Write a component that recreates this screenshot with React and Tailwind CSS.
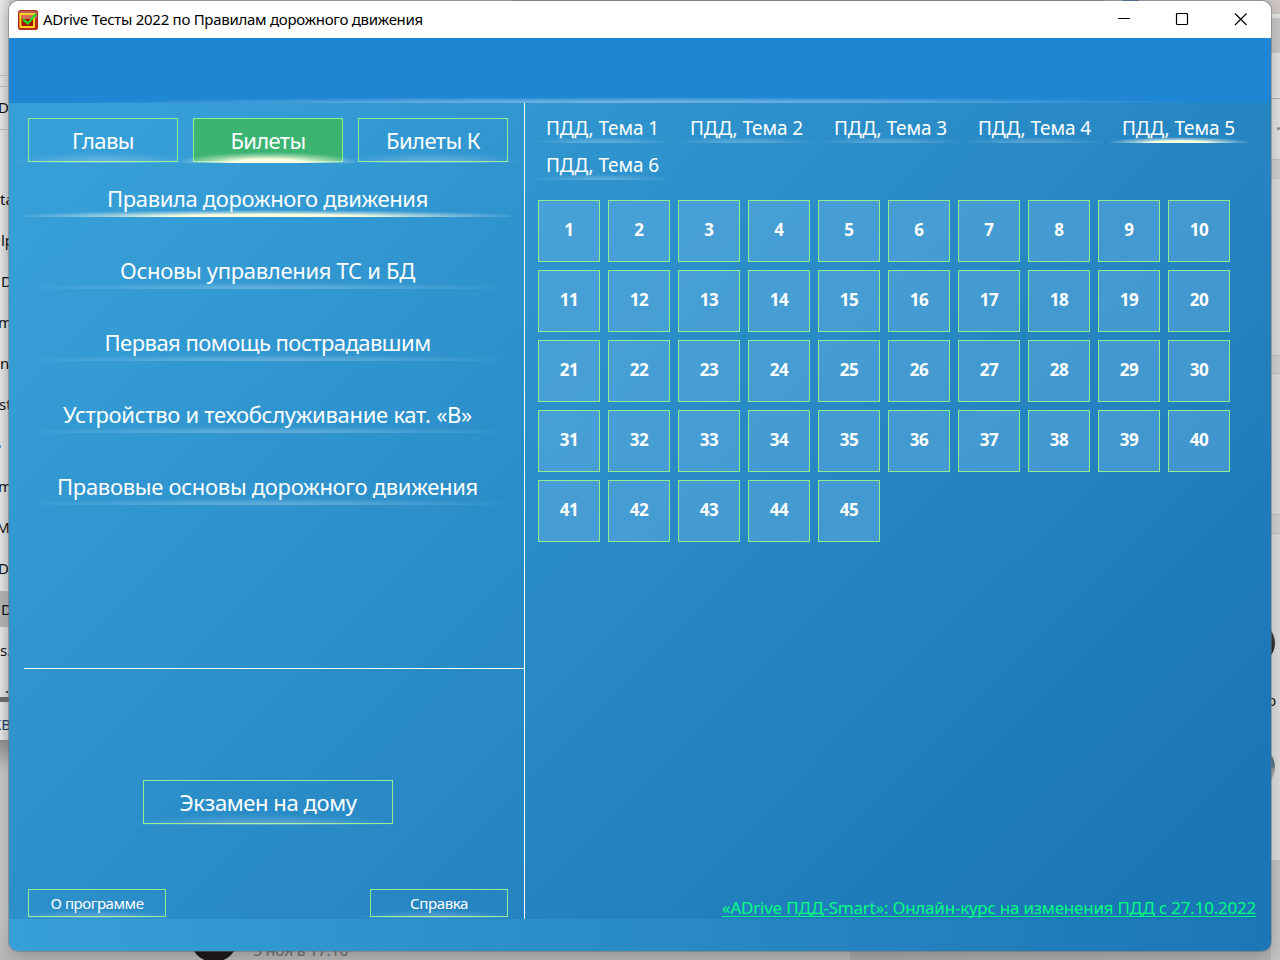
import { useLayoutEffect, useRef } from "react";

// Spreads a label over a given width by adjusting its letter spacing.
function Fit({ w, children, className = "" }) {
  const ref = useRef(null);
  useLayoutEffect(() => {
    const el = ref.current;
    el.style.letterSpacing = "0px";
    const natural = el.getBoundingClientRect().width;
    el.style.letterSpacing = (w - natural) / children.length + "px";
  }, [w, children]);
  return (
    <span ref={ref} className={`inline-block whitespace-nowrap ${className}`}>
      {children}
    </span>
  );
}

const soft =
  "bg-[radial-gradient(ellipse_54%_100%_at_50%_100%,rgba(255,255,255,.25)_0%,rgba(255,255,255,.17)_40%,rgba(255,255,255,.05)_80%,transparent_100%)]";
const bright =
  "bg-[radial-gradient(ellipse_54%_100%_at_50%_100%,#ffffe0_0%,#ffffe0_36%,rgba(255,255,224,.5)_62%,rgba(255,255,255,.18)_85%,transparent_100%)]";

function Glow({ on, className }) {
  return <span className={`pointer-events-none absolute ${on ? bright : soft} ${className}`} />;
}

function Button({ w, children, on, size, glow, className = "" }) {
  return (
    <button
      className={`relative flex items-center justify-center border border-[#90ee90] ${size} ${on ? "bg-[#3cb371]" : ""} ${className}`}
    >
      <Fit w={w}>{children}</Fit>
      <Glow on={on} className={glow} />
    </button>
  );
}

const chapters = [
  ["Правила дорожного движения", 321],
  ["Основы управления ТС и БД", 295],
  ["Первая помощь пострадавшим", 326],
  ["Устройство и техобслуживание кат. «В»", 409],
  ["Правовые основы дорожного движения", 421],
];

const leftScraps = [
  ["D", 97, -2], ["ta", 189, 0], ["lp", 230, 1], ["D", 271, 1], ["m", 312, -2], ["n", 353, 0], ["st", 394, -1],
  ["m", 476, -2], ["TM", 517, -12], ["DD", 558, -13], ["D", 599, 1], ["s.", 640, 0], [".", 677, 5], ["KB", 714, -8],
];

function Desktop() {
  return (
    <div className="absolute inset-0 bg-[#c4c4c5]">
      <div className="absolute top-0 left-0 h-[740px] w-[9px] overflow-hidden bg-[linear-gradient(to_right,#e8e8e8,#d2d2d2)] text-[15px] leading-5 text-[#111]">
        <div className="absolute top-[75px] h-px w-full bg-[#bdbdbd]" />
        <div className="absolute top-[86px] h-px w-full bg-[#bdbdbd]" />
        <div className="absolute top-[129px] h-px w-full bg-[#bdbdbd]" />
        <div className="absolute top-[591px] h-[36px] w-full bg-[#b5b5b5]" />
        <div className="absolute top-[445px] h-[3px] w-px bg-[#4aa8cc]" />
        <div className="absolute top-[697px] h-[5px] w-full bg-[#707070]" />
        {leftScraps.map(([t, y, x], i) => (
          <span
            key={i}
            className={`absolute whitespace-nowrap ${t === "KB" ? "text-[#1f4068]" : ""}`}
            style={{ top: y, left: x }}
          >
            {t}
          </span>
        ))}
      </div>
      <div className="absolute top-[740px] left-0 h-[220px] w-[163px] bg-[linear-gradient(#8f8f91,#c8c8ca_14%,#c8c8ca_80%,#b9b9bb)]" />
      <div className="absolute top-0 right-0 h-[860px] w-[9px] overflow-hidden bg-[#dddddd]">
        <div className="h-[14px] bg-[#cfc5c4]" />
        <div className="h-[4px] bg-[#e6e6e6]" />
        <div className="h-[35px] bg-[#c8c8c8]" />
        <div className="h-[45px] bg-[#e3e3e3]" />
        <div className="h-px bg-[#b0b0b0]" />
        <div className="h-[60px] bg-[#e1e1e1]" />
        <div className="h-[20px] border-y border-[#c0c3c9] bg-[#cfd0d2]" />
        <div className="absolute top-[355px] h-[19px] w-full border-y border-[#c0c3c9] bg-[#cfd0d2]" />
        <div className="absolute top-[514px] h-[20px] w-full border-y border-[#c0c3c9] bg-[#cfd0d2]" />
        <div className="absolute top-[622px] -left-[38px] size-[42px] rounded-full bg-[linear-gradient(#50584f,#181512)]" />
        <span className="absolute top-[690px] -left-[4px] text-[15px] leading-5 text-[#222]">р</span>
        <div className="absolute top-[746px] -left-[38px] size-[42px] rounded-full bg-[linear-gradient(#55798d_45%,#aaa29c_60%)]" />
        <div className="absolute top-[127px] right-0 size-[3px] rounded-full bg-[#888]" />
      </div>
      <div className="absolute top-0 left-[512px] h-px w-[593px] bg-[#aaa09e]" />
      <div className="absolute top-0 left-[1123px] h-px w-[16px] bg-[#2c6cb8]" />
      <div className="absolute top-[940px] left-[163px] h-[20px] w-[687px] overflow-hidden bg-[#bbbaba]">
        <div className="absolute -top-[26px] left-[27px] size-[48px] rounded-full bg-[#1d1a18]" />
        <span className="absolute top-0 left-[90px] text-[16px] leading-5 text-[#6d7076]">
          <Fit w={95}>3 ноя в 17:16</Fit>
        </span>
      </div>
      <div className="absolute top-[940px] left-[850px] h-[20px] w-[421px] bg-[linear-gradient(to_right,#a9aaac,#b4b5b7)]" />
    </div>
  );
}

function TitleBar() {
  return (
    <header className="flex h-[37px] items-center bg-white pl-[9px] text-[15px] text-black">
      <svg width="20" height="20" viewBox="0 0 20 20" className="mr-[5px]">
        <rect width="20" height="20" rx="2.5" fill="#b02a1c" />
        <rect x="1" y="1" width="18" height="8" rx="2" fill="#c4625a" />
        <rect x="2.5" y="4" width="13.5" height="13" fill="#a81008" stroke="#ffd21c" strokeWidth="2" />
        <path d="M4 9V5H15V9Z" fill="#cf6f5c" />
        <path d="M5 9.5 10 13.5 18 4" fill="none" stroke="#20d928" strokeWidth="2.3" />
      </svg>
      <Fit w={380}>ADrive Тесты 2022 по Правилам дорожного движения</Fit>
      <svg width="132" height="14" viewBox="0 0 132 14" className="mr-[22px] ml-auto" fill="none" stroke="#000" strokeWidth="1.2">
        <path d="M1 5.5H13" strokeWidth="1" />
        <rect x="59.5" y="0.5" width="11" height="11" rx="1" />
        <path d="M118 0.5 129.500 12M129.500 0.5 118 12" />
      </svg>
    </header>
  );
}

export default function App() {
  return (
    <div className="relative h-[960px] w-[1280px] overflow-hidden font-['Noto_Sans','Open_Sans',sans-serif]">
      <Desktop />
      <div className="absolute top-px left-[9px] flex h-[950px] w-[1262px] flex-col overflow-hidden rounded-[9px] text-white shadow-[0_0_0_1px_rgba(110,110,110,.5),0_6px_18px_rgba(0,0,0,.22)]">
        <TitleBar />
        <div className="relative h-[65px] shrink-0 bg-[#1e86d3]">
          <span className="absolute inset-x-0 bottom-0 h-[6px] bg-[radial-gradient(ellipse_46%_100%_at_50%_100%,rgba(255,255,255,.38)_0%,rgba(255,255,255,.28)_45%,rgba(255,255,255,.08)_82%,transparent_100%)]" />
        </div>
        <div className="flex h-[816px] shrink-0 bg-[linear-gradient(135deg,#379fd7_0%,#379fd7_7%,#1b76b5_92%,#1b76b5_100%)]">
          <div className="flex w-[516px] shrink-0 flex-col border-r border-white">
            <div className="flex h-[565px] flex-col pt-[15px]">
              <div className="flex gap-[15px] pl-[19px] text-[22px]">
                <Button w={62} size="h-[44px] w-[150px]" glow="-bottom-[2px] -left-[12px] h-[11px] w-[173px]">Главы</Button>
                <Button w={75} on size="h-[44px] w-[150px]" glow="-bottom-[2px] -left-[12px] h-[11px] w-[173px]">Билеты</Button>
                <Button w={94} size="h-[44px] w-[150px]" glow="-bottom-[2px] -left-[12px] h-[11px] w-[173px]">Билеты К</Button>
              </div>
              <nav className="flex flex-col pt-[16px] pl-[16px] text-[22px]">
                {chapters.map(([t, w], i) => (
                  <div key={t} className="relative mb-[33px] flex h-[39px] w-[485px] items-center justify-center pt-[2px]">
                    <Fit w={w}>{t}</Fit>
                    <Glow on={i === 0} className="inset-x-0 bottom-0 h-[7px]" />
                  </div>
                ))}
              </nav>
            </div>
            <div className="ml-[15px] flex grow flex-col border-t border-white">
              <div className="mt-[111px] ml-[119px] text-[22px]">
                <Button w={177} size="h-[44px] w-[250px]" glow="-bottom-[2px] -left-[12px] h-[11px] w-[264px]">Экзамен на дому</Button>
              </div>
              <div className="mt-[65px] flex justify-between pr-[16px] pl-[4px] text-[15px]">
                <Button w={93} size="h-[28px] w-[138px]" glow="-bottom-[2px] -left-[12px] h-[8px] w-[156px]">О программе</Button>
                <Button w={58} size="h-[28px] w-[138px]" glow="-bottom-[2px] -left-[12px] h-[8px] w-[156px]">Справка</Button>
              </div>
            </div>
          </div>
          <div className="flex grow flex-col">
            <div className="flex flex-wrap gap-x-[6px] pt-[7px] pl-[9px] text-[19px]">
              {[1, 2, 3, 4, 5, 6].map((n) => (
                <div key={n} className="relative flex h-[37px] w-[138px] items-center pl-[12px]">
                  <Fit w={113}>{`ПДД, Тема ${n}`}</Fit>
                  <Glow on={n === 5} className="inset-x-0 bottom-[4px] h-[6px]" />
                </div>
              ))}
            </div>
            <div className="mt-[16px] ml-[13px] grid w-[692px] grid-cols-10 gap-2 text-[17px] font-bold tracking-[-0.4px]">
              {Array.from({ length: 45 }, (_, i) => (
                <button key={i} className="flex h-[62px] w-[62px] items-center justify-center border border-[#90ee90] bg-[#68b3e3]/45 pb-[3px]">
                  {i + 1}
                </button>
              ))}
            </div>
            <a className="mt-auto mr-[15px] mb-[-1px] self-end text-[17px] leading-[24px] text-[#00ff7f]">
              <Fit w={534} className="underline decoration-1 underline-offset-[2px] [text-decoration-skip-ink:none]">«ADrive ПДД-Smart»: Онлайн-курс на изменения ПДД с 27.10.2022</Fit>
            </a>
          </div>
        </div>
        <footer className="grow bg-[linear-gradient(to_right,#379fd7,#1b76b5)]" />
      </div>
    </div>
  );
}
